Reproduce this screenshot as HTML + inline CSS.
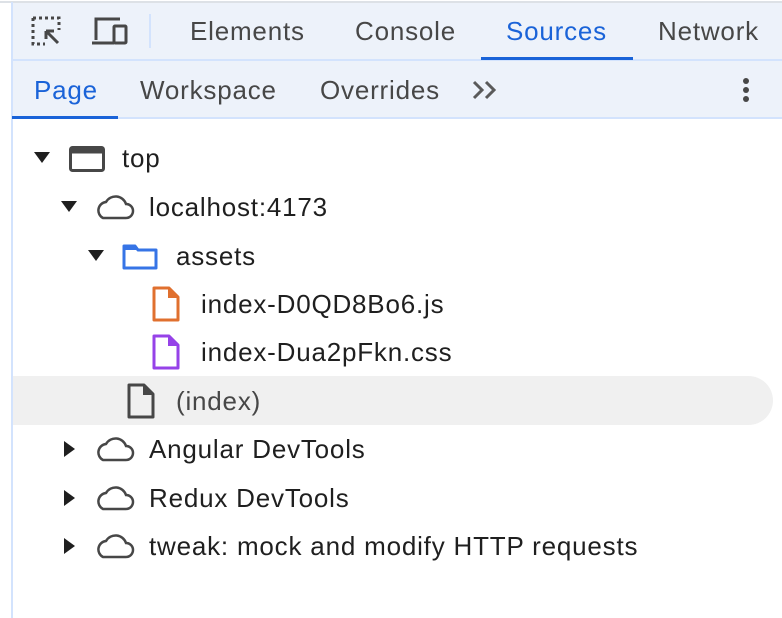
<!DOCTYPE html>
<html><head><meta charset="utf-8"><style>
body{margin:0;width:782px;height:618px;background:#fff;font-family:"Liberation Sans",sans-serif;position:relative;overflow:hidden;color:#1f1f1f}
.a{position:absolute}
.t{position:absolute;font-size:26px;letter-spacing:0.8px;line-height:28px;white-space:nowrap}
svg{position:absolute;overflow:visible}
</style></head><body>
<div class="a" style="left:11px;top:2px;width:771px;height:117px;background:#edf2fa"></div>
<div class="a" style="left:0;top:1px;width:782px;height:2px;background:#dde1e6"></div>
<div class="a" style="left:11px;top:2px;width:2px;height:616px;background:#d3e3fd"></div>
<div class="a" style="left:13px;top:59px;width:769px;height:2px;background:#d3e3fd"></div>
<div class="a" style="left:13px;top:117px;width:769px;height:2px;background:#d3e3fd"></div>
<div class="a" style="left:149px;top:14px;width:2px;height:34px;background:#d3e3fd"></div>
<div class="a" style="left:481px;top:57px;width:152px;height:3px;background:#1a63d8"></div>
<div class="a" style="left:12px;top:116px;width:106px;height:3px;background:#1a63d8"></div>
<svg style="left:30px;top:15px" width="36" height="32"><g fill="none" stroke="#474747" stroke-width="3"><path d="M3 3h26v12M3 3v26h12" stroke-dasharray="3 3"/><path d="M16 16l12 12M16 16h8M16 16v8"/></g></svg>
<svg style="left:91px;top:16px" width="38" height="30"><g fill="none" stroke="#474747" stroke-width="3"><path d="M5 24V3h24M1 27h22"/><rect x="23" y="10" width="12" height="17" rx="1"/></g></svg>
<div class="t" style="left:190px;top:17px;color:#474747">Elements</div>
<div class="t" style="left:355px;top:17px;color:#474747">Console</div>
<div class="t" style="left:506px;top:17px;color:#1a63d8">Sources</div>
<div class="t" style="left:658px;top:17px;color:#474747">Network</div>
<div class="t" style="left:34px;top:76px;color:#1a63d8">Page</div>
<div class="t" style="left:140px;top:76px;color:#474747">Workspace</div>
<div class="t" style="left:320px;top:76px;color:#474747">Overrides</div>
<svg style="left:472px;top:80px" width="28" height="20"><path d="M2 2l8 8-8 8M14 2l8 8-8 8" fill="none" stroke="#5a5a5a" stroke-width="3"/></svg>
<svg style="left:741px;top:77px" width="10" height="28"><g fill="#474747"><circle cx="5" cy="4" r="3"/><circle cx="5" cy="13" r="3"/><circle cx="5" cy="22" r="3"/></g></svg>
<div class="a" style="left:13px;top:376px;width:760px;height:49px;background:#f0f0f0;border-radius:0 25px 25px 0"></div>
<svg style="left:34px;top:152px" width="16" height="12"><path d="M0 0h16L8 11z" fill="#1f1f1f"/></svg>
<svg style="left:69px;top:146px" width="36" height="26"><rect x="1.5" y="1.5" width="33" height="23" rx="2" fill="none" stroke="#474747" stroke-width="3"/><rect x="1.5" y="1.5" width="33" height="6" fill="#474747"/></svg>
<div class="t" style="left:122px;top:144px">top</div>

<svg style="left:61px;top:201px" width="16" height="12"><path d="M0 0h16L8 11z" fill="#1f1f1f"/></svg>
<svg style="left:94px;top:192px" width="40" height="28"><path d="M9 26h23a7 7 0 0 0 0-14 11 11 0 0 0-20-2 8.5 8.5 0 0 0-3 16z" fill="none" stroke="#474747" stroke-width="2.5"/></svg>
<div class="t" style="left:149px;top:193px">localhost:4173</div>

<svg style="left:88px;top:250px" width="16" height="12"><path d="M0 0h16L8 11z" fill="#1f1f1f"/></svg>
<svg style="left:122px;top:243px" width="36" height="28"><path d="M2 3h11l3 4h18v18H2z" fill="none" stroke="#3674e6" stroke-width="3" stroke-linejoin="round"/><path d="M2 3h11l3 4H2z" fill="#3674e6"/></svg>
<div class="t" style="left:176px;top:242px">assets</div>

<svg style="left:152px;top:286px" width="28" height="36"><path d="M2 2h15l9 9v23H2z" fill="none" stroke="#e0702f" stroke-width="3" stroke-linejoin="round"/><path d="M16 2v10h10" fill="#e0702f"/></svg>
<div class="t" style="left:201px;top:290px">index-D0QD8Bo6.js</div>

<svg style="left:152px;top:334px" width="28" height="36"><path d="M2 2h15l9 9v23H2z" fill="none" stroke="#9642e8" stroke-width="3" stroke-linejoin="round"/><path d="M16 2v10h10" fill="#9642e8"/></svg>
<div class="t" style="left:201px;top:338px">index-Dua2pFkn.css</div>

<svg style="left:127px;top:383px" width="28" height="36"><path d="M2 2h15l9 9v23H2z" fill="none" stroke="#474747" stroke-width="3" stroke-linejoin="round"/><path d="M16 2v10h10" fill="#474747"/></svg>
<div class="t" style="left:176px;top:387px;color:#474747">(index)</div>

<svg style="left:64px;top:441px" width="12" height="16"><path d="M0 0v16l11-8z" fill="#1f1f1f"/></svg>
<svg style="left:94px;top:434px" width="40" height="28"><path d="M9 26h23a7 7 0 0 0 0-14 11 11 0 0 0-20-2 8.5 8.5 0 0 0-3 16z" fill="none" stroke="#474747" stroke-width="2.5"/></svg>
<div class="t" style="left:149px;top:435px">Angular DevTools</div>

<svg style="left:64px;top:490px" width="12" height="16"><path d="M0 0v16l11-8z" fill="#1f1f1f"/></svg>
<svg style="left:94px;top:483px" width="40" height="28"><path d="M9 26h23a7 7 0 0 0 0-14 11 11 0 0 0-20-2 8.5 8.5 0 0 0-3 16z" fill="none" stroke="#474747" stroke-width="2.5"/></svg>
<div class="t" style="left:149px;top:484px">Redux DevTools</div>

<svg style="left:64px;top:538px" width="12" height="16"><path d="M0 0v16l11-8z" fill="#1f1f1f"/></svg>
<svg style="left:94px;top:531px" width="40" height="28"><path d="M9 26h23a7 7 0 0 0 0-14 11 11 0 0 0-20-2 8.5 8.5 0 0 0-3 16z" fill="none" stroke="#474747" stroke-width="2.5"/></svg>
<div class="t" style="left:149px;top:532px">tweak: mock and modify HTTP requests</div>
</body></html>
